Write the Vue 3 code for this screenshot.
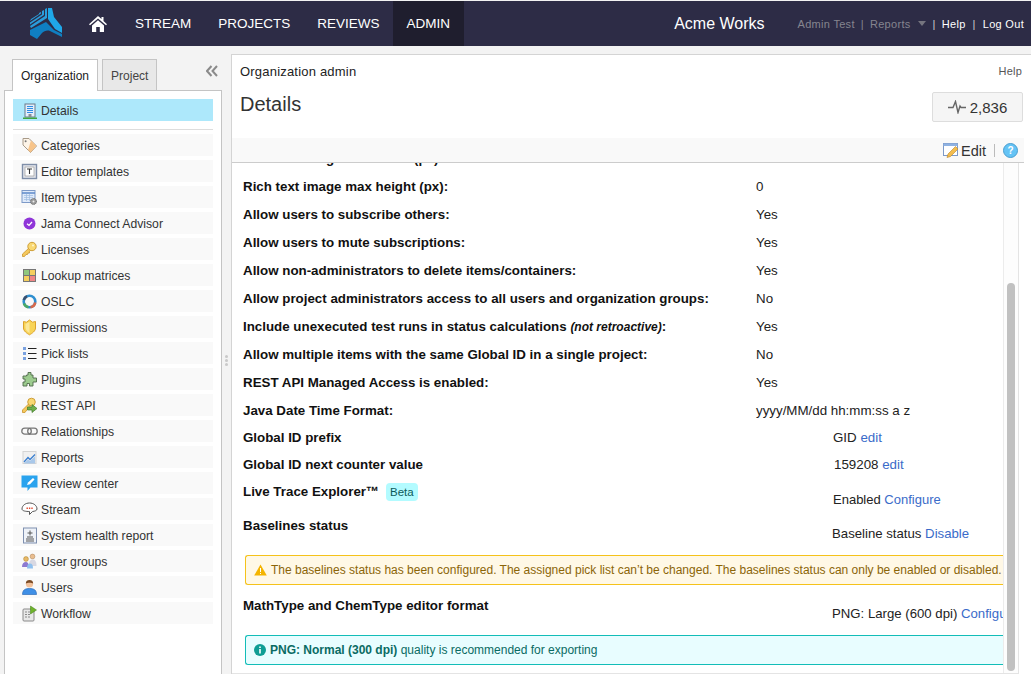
<template>
  <div class="page">
    <header class="topbar">
      <div class="logo">
        <svg width="32" height="31" viewBox="0 0 32 31">
          <path d="M15 1 L17 0 L17 10 L1 20 L0 18 L15 8 Z" fill="#2a9ddc" />
          <path d="M12 3 L14 2 L14 7 L0 16.5 L0 14.5 L12 6.5 Z" fill="#2a9ddc" />
          <path d="M9 5 L11 4 L11 5.5 L0 13 L1 11 L9 6 Z" fill="#2a9ddc" />
          <path d="M18 0 H22 L24 9 L32 19 V25 L25 21 L18 11 Z" fill="#1fa8e8" />
          <path d="M0 22 L16 14 L24 22 L32 26 V29 L20 23 C17 22 14 23 12 25 L7 31 L0 27 Z" fill="#0f7fc2" />
        </svg>
      </div>
      <svg class="home" width="18" height="16" viewBox="0 0 18 16">
        <path d="M9 0 L12.5 3 V1 H14.5 V5 L18 8.2 L17 9.3 L9 2.4 L1 9.3 L0 8.2 Z M3 9.5 L9 4.2 L15 9.5 V16 H10.8 V11 H7.2 V16 H3 Z" fill="#fff" />
      </svg>
      <nav class="nav">
        <a v-for="n in nav" :key="n" class="nav-item" :class="{ active: n === 'ADMIN' }">{{ n }}</a>
      </nav>
      <div class="org">Acme Works</div>
      <div class="user-links">
        <span class="muted">Admin Test</span>
        <span class="sep">|</span>
        <span class="muted">Reports</span>
        <span class="caret"></span>
        <span class="sep white">|</span>
        <b>Help</b>
        <span class="sep white wider">|</span>
        <b>Log Out</b>
      </div>
    </header>

    <div class="main">
      <aside class="sidebar">
        <div class="tabs-row">
          <div class="tab on">Organization</div>
          <div class="tab">Project</div>
          <svg class="collapse" width="12" height="12" viewBox="0 0 12 12">
            <path d="M5.5 1 L1 6 L5.5 11 M11 1 L6.5 6 L11 11" fill="none" stroke="#8a8a8a" stroke-width="2" />
          </svg>
        </div>
        <div class="side-panel">
          <div class="side-item selected">
            <span class="ico">
              <svg width="16" height="18" viewBox="0 0 16 18">
                <rect x="3" y="2" width="10" height="13" fill="#e4eefb" stroke="#6b7a8c" />
                <path d="M5 4.5h6M5 6.5h6M5 8.5h6M5 10.5h6" stroke="#2f8de4" stroke-width="1.2" />
                <rect x="6.5" y="12" width="3" height="3" fill="#8a8f96" />
                <path d="M1 15.5h14v1.5H1z" fill="#3fa63c" />
              </svg>
            </span>
            Details
          </div>
          <div class="divider"></div>
          <div v-for="item in items" :key="item.name" class="side-item">
            <span class="ico">
              <svg width="17" height="17" viewBox="0 0 17 17">
                <template v-if="item.icon === 'tag'">
                  <path d="M2 1.5 H8 L15.5 9 L9.5 15.5 L2 8 Z" fill="#fdf4e8" stroke="#a89a88" />
                  <path d="M10 3.5 L15.5 9 L9.5 15.5 L7 13 Z" fill="#f7c48a" />
                  <circle cx="4.6" cy="4.2" r="1" fill="#777" />
                </template>
                <template v-else-if="item.icon === 'editor'">
                  <rect x="1.5" y="1.5" width="14" height="14" fill="#e4e6ec" stroke="#7f8ea8" stroke-width="1.4" />
                  <rect x="4" y="4" width="9" height="9" fill="#fff" stroke="#8a8a8a" stroke-width=".6" />
                  <path d="M6 6h5M8.5 6v5" stroke="#333" stroke-width="1.1" />
                </template>
                <template v-else-if="item.icon === 'types'">
                  <rect x="1" y="1.5" width="13" height="12" fill="#dfeafa" stroke="#7d9ac8" />
                  <path d="M1 4h13" stroke="#5d88c8" stroke-width="1.5" />
                  <path d="M3 6.5h9M3 8.5h9M3 10.5h9M5.5 5v7M8.5 5v7" stroke="#9fbbe0" stroke-width=".7" />
                  <circle cx="12.5" cy="12.5" r="3" fill="#9a9a9a" stroke="#666" stroke-dasharray="1 .6" />
                  <circle cx="12.5" cy="12.5" r="1" fill="#eee" />
                </template>
                <template v-else-if="item.icon === 'advisor'">
                  <circle cx="8.5" cy="8.5" r="6" fill="#8f35d8" />
                  <path d="M6 8.7 L8 10.4 L11 7" fill="none" stroke="#fff" stroke-width="1.3" />
                </template>
                <template v-else-if="item.icon === 'key'">
                  <path d="M1.5 13 L8 7 L10 9 L8.5 10.5 L8.5 12 L7 12 L6.5 13.5 L5 13.5 L3.5 15.5 L1.5 15.5 Z" fill="#f5c85c" stroke="#c9962c" stroke-width=".8" />
                  <circle cx="11" cy="5.5" r="4.2" fill="#f9d873" stroke="#c9962c" stroke-width=".9" />
                  <circle cx="12" cy="4.5" r="1" fill="#fff6d0" />
                </template>
                <template v-else-if="item.icon === 'matrix'">
                  <rect x="2" y="2" width="13" height="13" fill="#777" />
                  <rect x="3" y="3" width="5" height="5" fill="#8fc77d" />
                  <rect x="9" y="3" width="5" height="5" fill="#f5cf5d" />
                  <rect x="3" y="9" width="5" height="5" fill="#f5cf5d" />
                  <rect x="9" y="9" width="5" height="5" fill="#f08585" />
                </template>
                <template v-else-if="item.icon === 'oslc'">
                  <circle cx="8.5" cy="8.5" r="5.8" fill="none" stroke="#2f8fd0" stroke-width="2.6" />
                  <path d="M3 10.5 A5.8 5.8 0 0 0 7.5 14.2" fill="none" stroke="#4aa866" stroke-width="2.6" />
                  <path d="M9.5 14.2 A5.8 5.8 0 0 0 14.2 9.5" fill="none" stroke="#d9694a" stroke-width="2.6" />
                  <path d="M2.8 7 A5.8 5.8 0 0 1 6 3.2" fill="none" stroke="#39506f" stroke-width="2.6" />
                </template>
                <template v-else-if="item.icon === 'shield'">
                  <path d="M2.5 2.5 L5.5 3.2 L8.5 1 L11.5 3.2 L14.5 2.5 V9 C14.5 12 11 14.5 8.5 15.8 C6 14.5 2.5 12 2.5 9 Z" fill="#f8d458" stroke="#dca32c" />
                  <path d="M8.5 3 V14 C6.5 13 4.5 11 4.5 8.8 V5 Z" fill="#fbe89a" />
                </template>
                <template v-else-if="item.icon === 'list'">
                  <path d="M2 2h3v3H2zM2 7h3v3H2zM2 12h3v3H2z" fill="#7aa2e0" />
                  <path d="M7 3.5h8.5M7 8.5h8.5M7 13.5h8.5" stroke="#222" stroke-width="1.1" />
                </template>
                <template v-else-if="item.icon === 'plugin'">
                  <path d="M5.5 4 H7 V1.5 H10 V4 H12 V7 H15.5 V11 H12 V15 H8.5 V12.5 H6 V15 H2 V11 H4 V8 H2 V5 H5.5 Z" fill="#9ccb8e" stroke="#4f6a4a" stroke-width=".9" />
                </template>
                <template v-else-if="item.icon === 'rest'">
                  <path d="M1.5 13 L7.5 7 L9.5 9 L5 14 L4 15.5 L1.5 15.5 Z" fill="#f5c85c" stroke="#c9962c" stroke-width=".8" />
                  <circle cx="10.5" cy="5" r="3.8" fill="#f9d873" stroke="#c9962c" stroke-width=".9" />
                  <path d="M6.5 10 H11 V7.5 L16 11.5 L11 15.5 V13 H6.5 Z" fill="#6fb04a" stroke="#3f7a2a" stroke-width=".7" />
                </template>
                <template v-else-if="item.icon === 'rel'">
                  <rect x=".8" y="5.2" width="9.5" height="6" rx="3" fill="none" stroke="#777" stroke-width="1.3" />
                  <rect x="6.7" y="5.2" width="9.5" height="6" rx="3" fill="none" stroke="#777" stroke-width="1.3" />
                </template>
                <template v-else-if="item.icon === 'reports'">
                  <rect x="2" y="2.5" width="13" height="12" fill="#f0f0f0" stroke="#d4d4d4" />
                  <path d="M3 13 L7 8.5 L9 10.5 L14 5.5" fill="none" stroke="#3b7fd0" stroke-width="1.3" />
                  <path d="M3 14.5 L7 10.5 L9 12 L14 7.5 V14.5 Z" fill="#a9c8ea" />
                </template>
                <template v-else-if="item.icon === 'review'">
                  <path d="M0.5 0.5 H16.5 V12.5 H9.5 L6.5 16 V12.5 H0.5 Z" fill="#2aa3ee" />
                  <path d="M6 10 L7 7.5 L12 3 L13.5 4.5 L9 9.2 Z" fill="#fff" />
                </template>
                <template v-else-if="item.icon === 'stream'">
                  <path d="M1 8 C1 4.5 4.5 2 8.5 2 C12.5 2 16 4.5 16 8 C16 9.5 14 10.2 11.5 10.5 L8.5 13.5 V10.5 C5 10.5 1 10 1 8 Z" fill="#fff" stroke="#555" stroke-width="1" />
                  <path d="M5.5 6.5h1.4v1.4H5.5zM7.9 6.5h1.4v1.4H7.9zM10.3 6.5h1.4v1.4h-1.4z" fill="#e2492f" />
                </template>
                <template v-else-if="item.icon === 'health'">
                  <rect x="2.5" y="1" width="13" height="15" fill="#eef2f8" stroke="#7f90b0" />
                  <path d="M9 3.5v5M6.5 6h5M6 10h6M5 12h8M5 14h8" stroke="#555" stroke-width="1" />
                </template>
                <template v-else-if="item.icon === 'groups'">
                  <circle cx="11.5" cy="3.5" r="2.4" fill="#e9bd8f" stroke="#a87f52" stroke-width=".5" />
                  <path d="M8 13 C8 8 9.5 6.5 11.5 6.5 C14 6.5 15.5 8 15.5 13 Z" fill="#d8d8e2" />
                  <circle cx="5" cy="6" r="2.4" fill="#e8b969" stroke="#a87f22" stroke-width=".5" />
                  <path d="M1 14 C1 10.5 2.5 9 5 9 C6.5 9 8 10.5 8 14 Z" fill="#8d7ad0" />
                  <path d="M6 15.5 C6 12 7 10.5 9 10.5 C11 10.5 12 12 12 15.5 Z" fill="#8fc0ee" />
                </template>
                <template v-else-if="item.icon === 'user'">
                  <path d="M1.5 15.5 C1.5 11 4 9.5 8.5 9.5 C13 9.5 15.5 11 15.5 15.5 Z" fill="#3f8fe6" stroke="#1f5fb0" stroke-width=".6" />
                  <circle cx="8.5" cy="5" r="3.6" fill="#f2c19b" />
                  <path d="M4.8 4.5 C4.8 2 6.5 1 8.5 1 C10.5 1 12.2 2 12.2 4.5 C10.5 3.5 6.5 3.5 4.8 4.5 Z" fill="#7a4a24" />
                </template>
                <template v-else-if="item.icon === 'workflow'">
                  <rect x="2" y="4" width="11" height="12" rx="1" fill="#e8e8e8" stroke="#8a8a8a" />
                  <path d="M4 7h2M7 7h2M4 9.5h2M7 9.5h2M4 12h2M7 12h2" stroke="#8a8a8a" stroke-width="1" />
                  <path d="M9.5 1 L15.5 5 L9.5 9 Z" fill="#6fb32a" stroke="#3d7a12" stroke-width=".5" />
                </template>
              </svg>
            </span>
            {{ item.name }}
          </div>
        </div>
      </aside>

      <div class="splitter">
        <span></span><span></span><span></span>
      </div>

      <section class="content">
        <div class="title-row">
          <span>Organization admin</span>
          <span class="help">Help</span>
        </div>
        <div class="heading-row">
          <h1>Details</h1>
          <div class="stat">
            <svg width="18" height="14" viewBox="0 0 18 14">
              <path d="M0 7.5h5L7.5 1.5 10 12.5 12 6l1 1.5h5" fill="none" stroke="#666" stroke-width="1.4" />
            </svg>
            2,836
          </div>
        </div>
        <div class="toolbar">
          <svg width="17" height="17" viewBox="0 0 17 17">
            <rect x=".5" y="1.5" width="14" height="12" fill="#fff" stroke="#7d9ac8" />
            <rect x=".5" y="1.5" width="14" height="2.5" fill="#8fb2e2" />
            <path d="M4 15.5 L5 12 L12.5 4.5 L15 7 L7.5 14.5 Z" fill="#f3bd4f" stroke="#b9842a" stroke-width=".6" />
          </svg>
          <span class="edit">Edit</span>
          <span class="tool-sep"></span>
          <span class="q">?</span>
        </div>
        <div class="scroll">
          <div class="rows">
            <div v-for="r in rows" :key="r.label" class="row">
              <span class="label">{{ r.label }}<i v-if="r.note">{{ r.note }}</i><template v-if="r.note">:</template></span>
              <span class="value">{{ r.value }}</span>
            </div>
          </div>
          <div class="wide first">
            <span class="label">Global ID prefix</span>
            <span class="val2">GID <a>edit</a></span>
          </div>
          <div class="wide second">
            <span class="label">Global ID next counter value</span>
            <span class="val2 tweak">159208 <a>edit</a></span>
          </div>
          <div class="wide third">
            <span class="label">Live Trace Explorer™ <em class="beta">Beta</em></span>
            <span class="val2 low">Enabled <a>Configure</a></span>
          </div>
          <div class="wide fourth">
            <span class="label">Baselines status</span>
            <span class="val2 low">Baseline status <a>Disable</a></span>
          </div>
          <div class="notice warn">
            <svg width="13" height="12" viewBox="0 0 13 12">
              <path d="M6.5 0.5 L12.8 11.5 H0.2 Z" fill="#f4b400" />
              <path d="M6 4h1v4H6zM6 9h1v1H6z" fill="#fff" />
            </svg>
            The baselines status has been configured. The assigned pick list can’t be changed. The baselines status can only be enabled or disabled.
          </div>
          <div class="wide fifth">
            <span class="label">MathType and ChemType editor format</span>
            <span class="val2 low">PNG: Large (600 dpi) <a>Configure</a></span>
          </div>
          <div class="notice info">
            <svg width="12" height="12" viewBox="0 0 12 12">
              <circle cx="6" cy="6" r="6" fill="#0f9d94" />
              <path d="M5.2 2.4h1.6v1.5H5.2zM5.2 5h1.6v4.6H5.2z" fill="#fff" />
            </svg>
            <span><b>PNG: Normal (300 dpi)</b> quality is recommended for exporting</span>
          </div>
          <div class="scrollbar"><div class="thumb"></div></div>
        </div>
      </section>
    </div>
  </div>
</template>

<script setup>
const nav = ['STREAM', 'PROJECTS', 'REVIEWS', 'ADMIN']

const items = [
  { name: 'Categories', icon: 'tag' },
  { name: 'Editor templates', icon: 'editor' },
  { name: 'Item types', icon: 'types' },
  { name: 'Jama Connect Advisor', icon: 'advisor' },
  { name: 'Licenses', icon: 'key' },
  { name: 'Lookup matrices', icon: 'matrix' },
  { name: 'OSLC', icon: 'oslc' },
  { name: 'Permissions', icon: 'shield' },
  { name: 'Pick lists', icon: 'list' },
  { name: 'Plugins', icon: 'plugin' },
  { name: 'REST API', icon: 'rest' },
  { name: 'Relationships', icon: 'rel' },
  { name: 'Reports', icon: 'reports' },
  { name: 'Review center', icon: 'review' },
  { name: 'Stream', icon: 'stream' },
  { name: 'System health report', icon: 'health' },
  { name: 'User groups', icon: 'groups' },
  { name: 'Users', icon: 'user' },
  { name: 'Workflow', icon: 'workflow' }
]

const rows = [
  { label: 'Rich text image max width (px):', value: '0' },
  { label: 'Rich text image max height (px):', value: '0' },
  { label: 'Allow users to subscribe others:', value: 'Yes' },
  { label: 'Allow users to mute subscriptions:', value: 'Yes' },
  { label: 'Allow non-administrators to delete items/containers:', value: 'Yes' },
  { label: 'Allow project administrators access to all users and organization groups:', value: 'No' },
  { label: 'Include unexecuted test runs in status calculations ', note: '(not retroactive)', value: 'Yes' },
  { label: 'Allow multiple items with the same Global ID in a single project:', value: 'No' },
  { label: 'REST API Managed Access is enabled:', value: 'Yes' },
  { label: 'Java Date Time Format:', value: 'yyyy/MM/dd hh:mm:ss a z' }
]
</script>

<style>
html, body {
  margin: 0;
  overflow: hidden;
}
</style>

<style scoped>
.page {
  width: 1031px;
  height: 674px;
  overflow: hidden;
  background: #f3f3f3;
  font-family: "Liberation Sans", Arial, sans-serif;
  font-size: 12.2px;
  color: #222;
  display: flex;
  flex-direction: column;
}

.topbar {
  height: 45px;
  margin-top: 1px;
  background: #2d2c46;
  display: flex;
  align-items: center;
  color: #fff;
  flex: none;
}
.logo {
  width: 32px;
  margin-left: 30px;
  display: flex;
  margin-top: -1px;
}
.home {
  margin-left: 27px;
}
.nav {
  display: flex;
  margin-left: 14.5px;
  height: 100%;
}
.nav-item {
  padding: 0 13.5px;
  display: flex;
  align-items: center;
  font-size: 13.5px;
}
.nav-item.active {
  background: #1f1e2e;
}
.org {
  margin-left: auto;
  font-size: 16px;
  margin-right: 33px;
}
.user-links {
  display: flex;
  align-items: center;
  gap: 5px;
  font-size: 11px;
  margin-right: 7px;
  letter-spacing: .3px;
}
.user-links b {
  font-weight: normal;
}
.muted {
  color: #85858f;
}
.sep {
  color: #85858f;
  margin: 0 1px;
}
.sep.white {
  color: #ccc;
}
.sep.wider {
  margin: 0 2px;
}
.caret {
  border: 4px solid transparent;
  border-top: 5px solid #75757f;
  border-bottom: 0;
  width: 0;
  margin: 0 1px 0 2px;
}

.main {
  flex: 1;
  display: flex;
  min-height: 0;
}

.sidebar {
  width: 218px;
  margin-left: 4px;
  flex: none;
  display: flex;
  flex-direction: column;
}
.tabs-row {
  display: flex;
  align-items: flex-end;
  height: 44px;
  padding-left: 8px;
  gap: 4px;
  position: relative;
}
.tab {
  height: 31px;
  box-sizing: border-box;
  padding: 1px 8px 0;
  display: flex;
  align-items: center;
  border: 1px solid #c4c4c4;
  border-bottom: 0;
  background: #e8e8e8;
  color: #444;
  font-size: 12px;
}
.tab.on {
  background: #fff;
  color: #222;
  height: 32px;
  margin-bottom: -1px;
  position: relative;
  z-index: 1;
}
.collapse {
  margin-left: auto;
  margin-right: 4px;
  align-self: flex-start;
  margin-top: 19px;
}
.side-panel {
  flex: 1;
  background: #fff;
  border: 1px solid #c4c4c4;
  border-bottom: 0;
  padding: 8px 8px 0;
  display: flex;
  flex-direction: column;
  gap: 4px;
}
.side-item {
  height: 22px;
  box-sizing: border-box;
  padding: 1px 0 0 8px;
  background: #f9f9f9;
  display: flex;
  align-items: center;
  gap: 3px;
  color: #333;
  flex: none;
}
.side-item.selected {
  background: #ade8fb;
}
.ico {
  width: 17px;
  height: 18px;
  display: flex;
  align-items: center;
  justify-content: center;
}
.divider {
  height: 1px;
  background: #ddd;
  margin: 4px 0 0;
  flex: none;
}

.splitter {
  width: 9px;
  flex: none;
  display: flex;
  flex-direction: column;
  align-items: center;
  justify-content: center;
  gap: 1px;
}
.splitter span {
  width: 3px;
  height: 3px;
  border-radius: 50%;
  background: #c9c9c9;
}

.content {
  flex: 1;
  margin-top: 8px;
  background: #fff;
  border: 1px solid #d4d4d4;
  border-right: 0;
  border-bottom: 0;
  min-width: 0;
  display: flex;
  flex-direction: column;
}
.title-row {
  display: flex;
  justify-content: space-between;
  padding: 9px 9px 0 8px;
  font-size: 13px;
  line-height: 15px;
  letter-spacing: .2px;
}
.help {
  font-size: 11px;
  color: #555;
}
.heading-row {
  display: flex;
  justify-content: space-between;
  padding: 13px 8px 0 8px;
  height: 59px;
  box-sizing: border-box;
}
h1 {
  margin: -2px 0 0;
  font-size: 20px;
  font-weight: normal;
  color: #333;
  line-height: 28px;
}
.stat {
  width: 91px;
  height: 30px;
  box-sizing: border-box;
  background: #f5f5f5;
  border: 1px solid #ddd;
  border-radius: 2px;
  display: flex;
  align-items: center;
  justify-content: center;
  gap: 4px;
  font-size: 15px;
  color: #333;
}
.toolbar {
  height: 24px;
  width: 786px;
  padding-right: 6px;
  background: #f9f9f9;
  border-bottom: 1px solid #ccc;
  display: flex;
  align-items: center;
  justify-content: flex-end;
  flex: none;
}
.edit {
  font-size: 14.5px;
  margin-left: 1px;
  color: #333;
  padding-top: 2px;
}
.tool-sep {
  width: 1px;
  height: 13px;
  background: #bbb;
  margin: 0 8px 0 8px;
}
.q {
  width: 13px;
  height: 13px;
  border-radius: 50%;
  background: #64c3f5;
  border: 1px solid #4a9ed0;
  color: #fff;
  font-size: 10px;
  font-weight: bold;
  display: flex;
  align-items: center;
  justify-content: center;
}

.scroll {
  flex: 1;
  width: 786px;
  position: relative;
  overflow: hidden;
  border-right: 1px solid #e4e4e4;
  border-bottom: 1px solid #e4e4e4;
  min-height: 0;
  font-size: 13.33px;
}
.rows {
  margin-top: -19px;
}
.row {
  height: 28px;
  display: flex;
  align-items: center;
  padding-left: 11px;
  color: #111;
}
.label {
  font-weight: bold;
  color: #111;
  white-space: pre-wrap;
}
.label i {
  font-size: 12px;
}
.row .label {
  width: 513px;
  flex: none;
}
.value {
  color: #222;
}
.wide {
  display: flex;
  padding-left: 11px;
  align-items: flex-start;
}
.wide .label {
  width: 590px;
  flex: none;
}
.wide.first {
  height: 27px;
  line-height: 27px;
}
.wide.second {
  height: 27px;
  line-height: 27px;
}
.wide.third {
  height: 39px;
  padding-top: 5px;
  box-sizing: border-box;
  line-height: 18px;
}
.wide.fourth {
  height: 30px;
  line-height: 18px;
}
.wide.fifth {
  height: 50px;
  padding-top: 12px;
  box-sizing: border-box;
  line-height: 18px;
  white-space: nowrap;
}
.val2.low {
  padding-top: 8px;
  margin-left: -1px;
  font-size: 13.2px;
}
.third .val2.low {
  margin-left: 0;
  font-size: 13px;
}
.val2.tweak {
  margin-left: 1px;
}
.val2 a {
  color: #3a6bc9;
}
.beta {
  font-style: normal;
  font-weight: normal;
  background: #b3fbff;
  color: #0b5a5a;
  padding: 3px 4px;
  border-radius: 4px;
  margin-left: 3px;
  font-size: 11.5px;
}
.notice {
  margin-left: 13px;
  height: 30px;
  width: 758px;
  box-sizing: border-box;
  border: 1px solid;
  border-right: 0;
  border-radius: 3px 0 0 3px;
  display: flex;
  align-items: center;
  gap: 4px;
  padding-left: 8px;
  font-size: 12px;
  white-space: nowrap;
  overflow: hidden;
}
.warn {
  background: #fff8e6;
  border-color: #f5c21a;
  color: #8b6508;
  margin-top: 8px;
}
.info {
  background: #e8fdff;
  border-color: #12bdb8;
  color: #0a6b63;
}
.scrollbar {
  position: absolute;
  top: 0;
  right: 0;
  bottom: 0;
  width: 15px;
  background: #fdfdfd;
  border-left: 1px solid #ececec;
  box-sizing: border-box;
}
.thumb {
  position: absolute;
  left: 3px;
  width: 8px;
  top: 120px;
  bottom: 2px;
  background: #c1c1c1;
  border-radius: 4px;
}
</style>
